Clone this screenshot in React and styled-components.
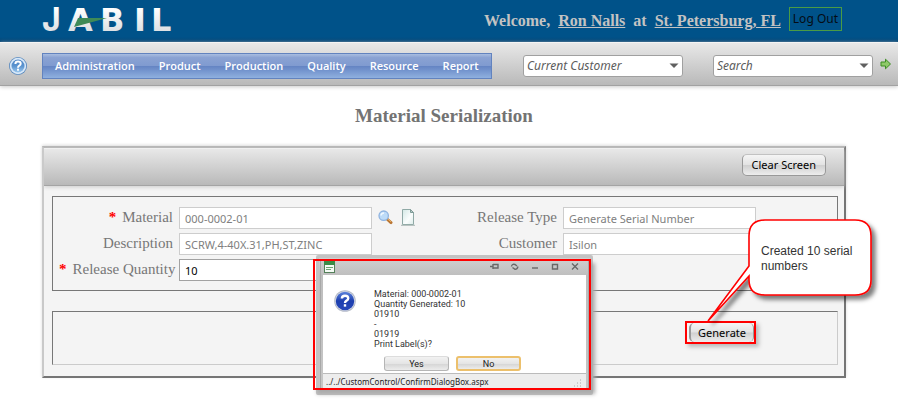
import React from "react";
import styled, { createGlobalStyle } from "styled-components";

const ui = '"Noto Sans", "Open Sans", sans-serif';
const small = 'Roboto, "Noto Sans", sans-serif';
const serif = '"Liberation Serif", serif';

const GlobalStyle = createGlobalStyle`
  *, *::before, *::after { box-sizing: border-box; }
  body { margin: 0; background: #fff; font-family: ${serif}; color: #777; }
  button, input, select { font: inherit; margin: 0; }
`;

const Header = styled.header`
  display: flex;
  align-items: center;
  justify-content: space-between;
  height: 42px;
  padding: 0 56px 0 40px;
  background: linear-gradient(#005289 88%, #004374);
`;

const Logo = styled.svg`
  display: block;
  width: 140px;
  height: 42px;
  flex: none;
`;

const Welcome = styled.div`
  display: flex;
  align-items: center;
  gap: 8px;
  height: 44px;
  white-space: nowrap;
  font: bold 16px/20px ${serif};
  color: #c3c3c3;
`;

const HeaderLink = styled.a`
  color: inherit;
  text-decoration: underline;
`;

const LogOut = styled.button`
  height: 24px;
  margin-bottom: 4px;
  padding: 0 3px;
  border: 1px solid #4a9b45;
  background: transparent;
  color: #050c14;
  font: 12px/20px ${ui};
`;

const NavBar = styled.nav`
  display: flex;
  align-items: center;
  height: 44px;
  padding: 4px 6px 0 8px;
  border-top: 1px solid #f4f4f4;
  border-bottom: 1px solid #a2a2a2;
  background: linear-gradient(#e8e8e8, #b9b9b9);
  box-shadow: 0 1px 4px #ccc;
`;

const HelpButton = styled.button`
  display: flex;
  width: 20px;
  height: 20px;
  margin-right: 14px;
  padding: 0;
  border: 0;
  background: none;
`;

const Menu = styled.ul`
  display: flex;
  align-items: center;
  gap: 24px;
  height: 26px;
  margin: 0;
  padding: 0 12px;
  list-style: none;
  border: 1px solid #6283bf;
  background: linear-gradient(#a9bde0, #8aa2d3 15%, #809bd0 48%, #6585c4 52%, #8fb0df);
`;

const MenuLink = styled.a`
  display: block;
  color: #fff;
  font: 600 11px/24px "Open Sans", ${ui};
  text-decoration: none;
  white-space: nowrap;
`;

const Filters = styled.div`
  display: flex;
  align-items: center;
  gap: 30px;
  margin-left: auto;
`;

const SelectBox = styled.label`
  display: flex;
  align-items: center;
  position: relative;
`;

const Select = styled.select`
  width: 160px;
  height: 22px;
  padding: 0 20px 0 3px;
  appearance: none;
  border: 1px solid #a0a0a0;
  border-radius: 3px;
  background: #fff;
  color: #5c5c5c;
  font: italic 12px/20px ${ui};
`;

const Caret = styled.svg`
  position: absolute;
  right: 4px;
  pointer-events: none;
`;

const GoButton = styled.button`
  display: flex;
  width: 12px;
  height: 22px;
  margin-left: 7px;
  padding: 3px 0 0;
  border: 0;
  background: none;
`;

const Main = styled.main`
  margin: 0 52px 0 42px;
  padding-bottom: 28px;
`;

const Title = styled.h1`
  margin: 0;
  padding: 18px 0;
  text-align: center;
  font: bold 19px/24px ${serif};
  color: #737373;
`;

const Panel = styled.section`
  position: relative;
  border: 2px solid;
  border-color: #b5b5b5 #757575 #757575 #c9c9c9;
  background: #f4f4f4;
  box-shadow: 0 -1px 3px #ddd;
`;

const Toolbar = styled.div`
  display: flex;
  justify-content: flex-end;
  height: 38px;
  padding: 5px 18px 0;
  border-top: 1px solid #f0f0f0;
  border-bottom: 1px solid #a4a4a4;
  background: linear-gradient(#e8e8e8, #b9b9b9);
  box-shadow: 0 1px 4px #ccc;
`;

const Button = styled.button`
  height: 22px;
  padding: 0 9px;
  border: 1px solid #999;
  border-top-color: #c2c2c2;
  border-radius: 5px;
  background: linear-gradient(#f5f5f5, #e3e3e3 48%, #d0d0d0 52%, #ededed);
  color: #000;
  font: 11px/20px ${ui};
  white-space: nowrap;
`;

const Form = styled.form`
  display: grid;
  gap: 20px;
  padding: 10px 6px 11px 8px;
`;

const Fields = styled.div`
  display: grid;
  grid-template-columns: 120px 193px 74px 117px 193px;
  grid-auto-rows: 22px;
  gap: 4px 0;
  padding: 10px 6px 9px;
  border: 1px solid #777;
`;

const Label = styled.label`
  padding-right: 6px;
  text-align: right;
  white-space: nowrap;
  font: 15px/20px ${serif};
  color: #777;
`;

const LeftLabel = styled(Label)`
  grid-column: 1;
`;

const RightLabel = styled(Label)`
  grid-column: 4;
`;

const Required = styled.span`
  color: #f00;
  font-weight: bold;
  margin-right: 6px;
`;

const Input = styled.input`
  width: 100%;
  height: 22px;
  padding: 0 5px;
  border: 1px solid ${(p) => (p.readOnly ? "#cdcdcd" : "#a2a2a2")};
  border-radius: 0;
  background: #fff;
  color: ${(p) => (p.readOnly ? "#808080" : "#000")};
  font: 11px/20px ${ui};
`;

const FieldTools = styled.div`
  display: flex;
  align-items: center;
  gap: 8px;
  height: 20px;
  padding-left: 6px;
`;

const ToolButton = styled.button`
  display: flex;
  padding: 0;
  border: 0;
  background: none;
`;

const Actions = styled.div`
  display: flex;
  justify-content: flex-end;
  align-items: center;
  height: 54px;
  padding: 0 81px 12px 0;
  border: 1px solid;
  border-color: #777 #cbcbcb #cbcbcb #777;
`;

const Highlight = styled.div`
  display: flex;
  border: 2px solid #f00;
  box-shadow: 3px 3px 4px #bbb;
`;

const GenerateButton = styled(Button)`
  height: 19px;
  margin-left: 2px;
  padding: 0 7px;
  border-width: 0 1px 0 2px;
  line-height: 19px;
`;

const DialogLayer = styled.div`
  position: absolute;
  left: 269px;
  top: 111px;
  padding: 0 3px;
`;

const DialogMark = styled.div`
  position: absolute;
  inset: 0 5px 5px 0;
  border: 2px solid #f00;
  box-shadow: 4px 4px 4px #aaa;
  pointer-events: none;
`;

const Dialog = styled.div`
  width: 277px;
  margin-top: -4px;
  padding: 2px 4px 4px;
  border: 3px solid #c3c3c3;
  border-radius: 2px;
  outline: 1px solid #a8a8a8;
  outline-offset: -5px;
  background: linear-gradient(#d0d0d0, #bebebe 18px, #c6c6c6);
  color: #222;
  font: 9px/10px ${small};
`;

const DialogTitle = styled.div`
  display: flex;
  align-items: center;
  justify-content: space-between;
  height: 15px;
  padding: 0 5px 2px 1px;
`;

const WindowTools = styled.div`
  display: flex;
  gap: 8px;
`;

const DialogBody = styled.div`
  display: grid;
  grid-template-columns: 38px 1fr;
  gap: 0 3px;
  height: 98px;
  padding: 14px 0 0 10px;
  background: #fff;
`;

const Message = styled.p`
  margin: 0;
  white-space: pre-line;
  color: #333;
`;

const DialogButtons = styled.div`
  grid-column: 1 / -1;
  display: flex;
  gap: 7px;
  padding: 5px 0 0 51px;
`;

const DialogButton = styled.button`
  width: 65px;
  height: 15px;
  padding: 0;
  border: ${(p) => (p.$active ? "2px solid #ecc06c" : "1px solid #b5b5b5")};
  border-top-color: ${(p) => (p.$active ? "#ecc06c" : "#ddd")};
  border-radius: 3px;
  background: linear-gradient(#f2f2f2, #e5e5e5 50%, #d4d4d4 51%, #ececec);
  color: #222;
  font: 9px/10px ${small};
`;

const StatusBar = styled.div`
  display: flex;
  align-items: flex-end;
  justify-content: space-between;
  height: 15px;
  padding: 0 4px 1px 3px;
  border-top: 1px solid #bbb;
  background: #ededed;
  font: 8px/11px ${ui};
`;

const Callout = styled.aside`
  position: absolute;
  right: -28px;
  top: 70px;
  width: 165px;
  height: 116px;
  padding: 26px 0 0 54px;
  pointer-events: none;
  color: #333;
  font: 12px/15px "Liberation Sans", sans-serif;
`;

const Bubble = styled.svg`
  position: absolute;
  left: 0;
  top: 0;
  overflow: visible;
`;

const CalloutText = styled.p`
  position: relative;
  margin: 0;
`;

const menuItems = ["Administration", "Product", "Production", "Quality", "Resource", "Report"];

function JabilLogo() {
  return (
    <Logo viewBox="0 0 140 42" role="img" aria-label="Jabil">
      <defs>
        <linearGradient id="silver" x1="0" y1="0" x2="0" y2="1">
          <stop offset="0.2" stopColor="#fff" />
          <stop offset="1" stopColor="#d3d6da" />
        </linearGradient>
      </defs>
      <text y="31" fill="url(#silver)" fontWeight="700" fontSize="32">
        <tspan x="2" fontFamily="Inter, sans-serif">J</tspan>
        <tspan x="28 60 94 111" fontFamily='"DejaVu Sans", sans-serif'>ABIL</tspan>
      </text>
      <path d="M38 18 L67 18 L34 27 Z" fill="#3f8a57" />
    </Logo>
  );
}

function QuestionBall({ size, dark }) {
  const id = dark ? "ball-dark" : "ball-light";
  return (
    <svg width={size} height={size} viewBox="0 0 20 20" aria-hidden="true">
      <defs>
        <linearGradient id={id} x1="0" y1="0" x2="0" y2="1">
          <stop offset="0" stopColor={dark ? "#5c83dc" : "#4f86c6"} />
          <stop offset="0.5" stopColor={dark ? "#1d3fae" : "#5a93cf"} />
          <stop offset="1" stopColor={dark ? "#2748ba" : "#9cc8ee"} />
        </linearGradient>
      </defs>
      <circle cx="10" cy="10" r="9" fill={dark ? "#b4bac8" : "#5587be"} />
      <circle cx="10" cy="10" r="8.2" fill={dark ? "#dfe3ec" : "#d8e8f8"} />
      <circle cx="10" cy="10" r={dark ? 7.7 : 6.5} fill={`url(#${id})`} />
      <path d="M7.4 8 Q7.4 5.6 10 5.6 Q12.7 5.6 12.7 7.8 Q12.7 9 11.3 9.7 Q10 10.4 10 11.7" fill="none" stroke="#fff" strokeWidth="2" />
      <rect x="9" y="12.7" width="2" height="2" fill="#fff" />
    </svg>
  );
}

function Combo({ name }) {
  return (
    <SelectBox>
      <Select aria-label={name} defaultValue={name}>
        <option>{name}</option>
      </Select>
      <Caret width="10" height="6" viewBox="0 0 10 6" aria-hidden="true">
        <path d="M0.5 0.5 H9.5 L5 5 Z" fill="#606060" />
      </Caret>
    </SelectBox>
  );
}

function MagnifierIcon() {
  return (
    <svg width="15" height="15" viewBox="0 0 15 15" aria-hidden="true">
      <path d="M9 9 L13 12.6" stroke="#b97532" strokeWidth="3" strokeLinecap="round" />
      <path d="M9.5 8.8 L13 11.8" stroke="#e9b267" strokeWidth="1" />
      <circle cx="5.7" cy="5.7" r="4.7" fill="#bddbf8" stroke="#8fb3e0" strokeWidth="1.3" />
      <path d="M3 5.5 Q3.4 3 6 3" stroke="#f0f8ff" strokeWidth="1.5" fill="none" />
    </svg>
  );
}

function PageIcon() {
  return (
    <svg width="15" height="17" viewBox="0 0 15 17" aria-hidden="true">
      <defs>
        <linearGradient id="page" x1="0" y1="0" x2="1" y2="1">
          <stop offset="0" stopColor="#d3e8e5" />
          <stop offset="0.6" stopColor="#fafdfd" />
          <stop offset="1" stopColor="#dcebe9" />
        </linearGradient>
      </defs>
      <path d="M1.5 0.5 H9.5 L12.5 3.5 V15.5 H1.5 Z" fill="url(#page)" stroke="#8fa9a6" />
      <path d="M9.5 0.5 V3.5 H12.5 Z" fill="#b9d0cd" stroke="#7f9b97" />
      <path d="M0 16.3 H14" stroke="#aab7b5" />
    </svg>
  );
}

function WindowIcon() {
  return (
    <svg width="11" height="12" viewBox="0 0 11 12" aria-hidden="true">
      <rect x="0.5" y="0.5" width="10" height="11" fill="#f5fbf5" stroke="#54805a" />
      <rect x="0" y="0" width="11" height="4" fill="#3b8b47" />
      <path d="M2 6.5 H9 M2 8.5 H7" stroke="#6aa574" />
    </svg>
  );
}

const windowGlyphs = [
  ["Pin", "M1 5.5 H4 M4 3 V8 M4 3.5 H9 V7 H4"],
  ["Reload", "M2.5 5.5 Q3 2.5 6 3.5 L8 5 M9 5.5 Q8 9 5.5 8 L3.5 6.5"],
  ["Minimize", "M3 7 H9"],
  ["Maximize", "M3.5 3.5 H8.5 V8 H3.5 Z"],
  ["Close", "M3 2.5 L9 8.5 M9 2.5 L3 8.5"],
];

const GlyphButton = styled(ToolButton)`
  width: 12px;
  height: 12px;
`;

export default function App() {
  return (
    <>
      <GlobalStyle />
      <Header>
        <JabilLogo />
        <Welcome>
          <span>Welcome,</span>
          <HeaderLink href="#user">Ron Nalls</HeaderLink>
          <span>at</span>
          <HeaderLink href="#site">St. Petersburg, FL</HeaderLink>
          <LogOut type="button">Log Out</LogOut>
        </Welcome>
      </Header>
      <NavBar>
        <HelpButton type="button" aria-label="Help">
          <QuestionBall size={20} />
        </HelpButton>
        <Menu>
          {menuItems.map((item) => (
            <li key={item}>
              <MenuLink href={`#${item.toLowerCase()}`}>{item}</MenuLink>
            </li>
          ))}
        </Menu>
        <Filters>
          <Combo name="Current Customer" />
          <Combo name="Search" />
        </Filters>
        <GoButton type="button" aria-label="Go">
          <svg width="12" height="12" viewBox="0 0 12 12" aria-hidden="true">
            <path d="M1 4 H5.5 V1.2 L10.5 6 L5.5 10.8 V8 H1 Z" fill="#8fc96a" stroke="#3c8d22" />
          </svg>
        </GoButton>
      </NavBar>
      <Main>
        <Title>Material Serialization</Title>
        <Panel>
          <Toolbar>
            <Button type="button">Clear Screen</Button>
          </Toolbar>
          <Form onSubmit={(e) => e.preventDefault()}>
            <Fields>
              <LeftLabel htmlFor="material"><Required>*</Required>Material</LeftLabel>
              <Input id="material" readOnly value="000-0002-01" />
              <FieldTools>
                <ToolButton type="button" aria-label="Find material"><MagnifierIcon /></ToolButton>
                <ToolButton type="button" aria-label="New"><PageIcon /></ToolButton>
              </FieldTools>
              <RightLabel htmlFor="type">Release Type</RightLabel>
              <Input id="type" readOnly value="Generate Serial Number" />
              <LeftLabel htmlFor="description">Description</LeftLabel>
              <Input id="description" readOnly value="SCRW,4-40X.31,PH,ST,ZINC" />
              <RightLabel htmlFor="customer">Customer</RightLabel>
              <Input id="customer" readOnly value="Isilon" />
              <LeftLabel htmlFor="quantity"><Required>*</Required>Release Quantity</LeftLabel>
              <Input id="quantity" defaultValue="10" />
            </Fields>
            <Actions>
              <Highlight>
                <GenerateButton type="submit">Generate</GenerateButton>
              </Highlight>
            </Actions>
          </Form>
          <DialogLayer>
            <Dialog role="dialog" aria-label="Print labels">
              <DialogTitle>
                <WindowIcon />
                <WindowTools>
                  {windowGlyphs.map(([name, d]) => (
                    <GlyphButton key={name} type="button" aria-label={name}>
                      <svg width="12" height="12" viewBox="0 0 12 12" aria-hidden="true">
                        <path d={d} fill="none" stroke="#686868" strokeWidth="1.4" />
                      </svg>
                    </GlyphButton>
                  ))}
                </WindowTools>
              </DialogTitle>
              <DialogBody>
                <QuestionBall size={24} dark />
                <Message>{"Material: 000-0002-01\nQuantity Generated: 10\n01910\n-\n01919\nPrint Label(s)?"}</Message>
                <DialogButtons>
                  <DialogButton type="button">Yes</DialogButton>
                  <DialogButton type="button" $active>No</DialogButton>
                </DialogButtons>
              </DialogBody>
              <StatusBar>
                <span>../../CustomControl/ConfirmDialogBox.aspx</span>
                <svg width="8" height="8" viewBox="0 0 8 8" aria-hidden="true">
                  <path d="M6 1h1M6 4h1M3 4h1M6 7h1M3 7h1M0 7h1" stroke="#aaa" />
                </svg>
              </StatusBar>
            </Dialog>
            <DialogMark />
          </DialogLayer>
          <Callout>
            <Bubble width="165" height="116" viewBox="0 0 165 116" aria-hidden="true">
              <defs>
                <filter id="cast" x="-20%" y="-20%" width="150%" height="150%">
                  <feDropShadow dx="4" dy="4" stdDeviation="2" floodOpacity="0.5" />
                </filter>
              </defs>
              <path
                d="M58 2 H148 Q164 2 164 18 V62 Q164 77 148 77 H58 Q42 77 42 62 V58 L1 103 L42 48 V18 Q42 2 58 2 Z"
                fill="#fff"
                stroke="#f00"
                strokeWidth="1.6"
                filter="url(#cast)"
              />
            </Bubble>
            <CalloutText>Created 10 serial numbers</CalloutText>
          </Callout>
        </Panel>
      </Main>
    </>
  );
}
